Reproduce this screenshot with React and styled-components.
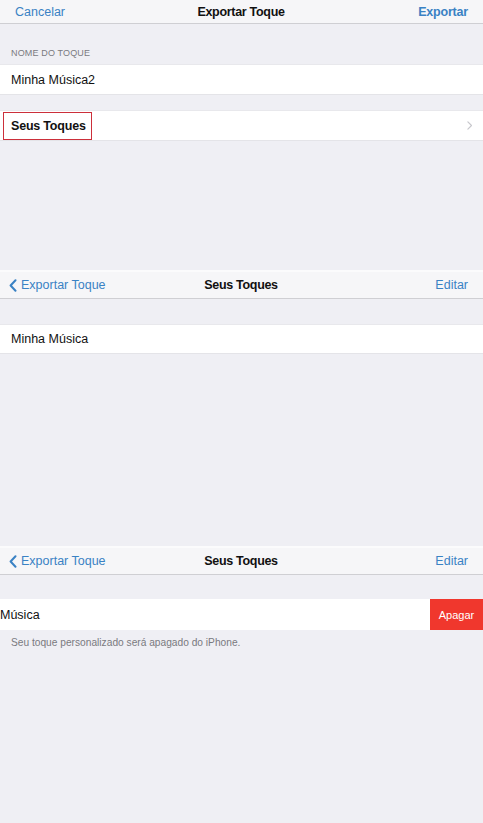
import React from 'react'
import styled, { createGlobalStyle } from 'styled-components'

const GlobalStyle = createGlobalStyle`
  html, body {
    margin: 0;
    padding: 0;
    background: #efeff4;
  }
  body {
    font-family: "Liberation Sans", Arial, sans-serif;
    -webkit-font-smoothing: antialiased;
  }
`

const Chevron = ({ color = '#c7c7cc', size = 9 }) => (
  <svg width={size * 0.6} height={size} viewBox="0 0 6 10" fill="none">
    <path d="M1 1l4 4-4 4" stroke={color} strokeWidth="1.3" strokeLinecap="round" strokeLinejoin="round" />
  </svg>
)

const BackChevron = () => (
  <svg width="8" height="13" viewBox="0 0 8 13" fill="none">
    <path d="M6.5 1.2L1.6 6.5l4.9 5.3" stroke="#3a82c4" strokeWidth="2" strokeLinecap="round" strokeLinejoin="round" />
  </svg>
)

const App = () => {
  return (
    <Page>
      <GlobalStyle />

      <Panel $height={270}>
        <NavBar $height={23}>
          <NavLeft>Cancelar</NavLeft>
          <NavTitle>Exportar Toque</NavTitle>
          <NavRight $bold>Exportar</NavRight>
        </NavBar>
        <SectionHeader>NOME DO TOQUE</SectionHeader>
        <Row>
          <RowText>Minha Música2</RowText>
        </Row>
        <Spacer $h={15} />
        <Row>
          <Highlight>
            <RowText $bold>Seus Toques</RowText>
          </Highlight>
          <RowChevron>
            <Chevron />
          </RowChevron>
        </Row>
      </Panel>

      <Panel $height={276}>
        <TopLine />
        <NavBar $height={26}>
          <NavLeft>
            <BackChevron />
            Exportar Toque
          </NavLeft>
          <NavTitle>Seus Toques</NavTitle>
          <NavRight>Editar</NavRight>
        </NavBar>
        <Spacer $h={25} />
        <Row $h={30}>
          <RowText>Minha Música</RowText>
        </Row>
      </Panel>

      <Panel $height={277}>
        <TopLine />
        <NavBar $height={26}>
          <NavLeft>
            <BackChevron />
            Exportar Toque
          </NavLeft>
          <NavTitle>Seus Toques</NavTitle>
          <NavRight>Editar</NavRight>
        </NavBar>
        <Spacer $h={24} />
        <SwipeRow>
          {/* row swiped left: only the tail of the name is still visible */}
          <SwipeContent>
            <RowText>Música</RowText>
          </SwipeContent>
          <DeleteButton>Apagar</DeleteButton>
        </SwipeRow>
        <Footer>Seu toque personalizado será apagado do iPhone.</Footer>
      </Panel>
    </Page>
  )
}

export default App

const Page = styled.div`
  width: 483px;
  height: 823px;
  overflow: hidden;
  background: #efeff4;
`

const Panel = styled.section`
  height: ${p => p.$height}px;
  display: flex;
  flex-direction: column;
  background: #efeff4;
  overflow: hidden;
`

const TopLine = styled.div`
  height: 2px;
  background: #fbfbfc;
`

const NavBar = styled.header`
  height: ${p => p.$height}px;
  flex-shrink: 0;
  display: grid;
  grid-template-columns: 1fr auto 1fr;
  align-items: center;
  padding: 0 15px 0 9px;
  background: #f6f6f8;
  border-bottom: 1px solid #cfcfd3;
`

const NavLeft = styled.div`
  display: flex;
  align-items: center;
  gap: 4px;
  padding-left: 6px;
  font-size: 12.5px;
  color: #3a82c4;
  svg {
    margin-left: -6px;
  }
`

const NavTitle = styled.div`
  font-size: 12.5px;
  font-weight: bold;
  color: #111;
  letter-spacing: -0.3px;
  padding-left: 5px;
`

const NavRight = styled.div`
  justify-self: end;
  font-size: 12.5px;
  font-weight: ${p => (p.$bold ? 'bold' : 'normal')};
  color: #3a82c4;
  letter-spacing: ${p => (p.$bold ? '-0.2px' : '0')};
`

const SectionHeader = styled.div`
  height: 40px;
  box-sizing: border-box;
  display: flex;
  align-items: flex-end;
  padding: 0 11px 6px;
  font-size: 9px;
  color: #7a7a7f;
  letter-spacing: 0.15px;
`

const Spacer = styled.div`
  height: ${p => p.$h}px;
  flex-shrink: 0;
`

const Row = styled.div`
  height: ${p => p.$h || 31}px;
  flex-shrink: 0;
  box-sizing: border-box;
  display: flex;
  align-items: center;
  justify-content: space-between;
  padding: 0 11px;
  background: #fff;
  border-top: 1px solid #e8e8ec;
  border-bottom: 1px solid #e4e4e8;
  position: relative;
`

const RowText = styled.span`
  font-size: 12.5px;
  font-weight: ${p => (p.$bold ? 'bold' : 'normal')};
  color: #111;
  white-space: nowrap;
  letter-spacing: ${p => (p.$bold ? '-0.2px' : '0')};
`

const Highlight = styled.div`
  position: absolute;
  left: 3px;
  top: 1px;
  width: 89px;
  height: 28px;
  box-sizing: border-box;
  border: 1.5px solid #cc2f3a;
  display: flex;
  align-items: center;
  padding-left: 7px;
`

const RowChevron = styled.div`
  margin-left: auto;
  display: flex;
`

const SwipeRow = styled.div`
  height: 31px;
  flex-shrink: 0;
  display: flex;
  background: #fff;
  overflow: hidden;
`

const SwipeContent = styled.div`
  flex: 1;
  display: flex;
  align-items: center;
  padding-left: 0;
`

const DeleteButton = styled.div`
  width: 53px;
  flex-shrink: 0;
  display: flex;
  align-items: center;
  justify-content: center;
  background: #f0372d;
  color: #fff;
  font-size: 11px;
`

const Footer = styled.div`
  padding: 7px 11px 0;
  font-size: 10.2px;
  color: #7a7a7f;
`
